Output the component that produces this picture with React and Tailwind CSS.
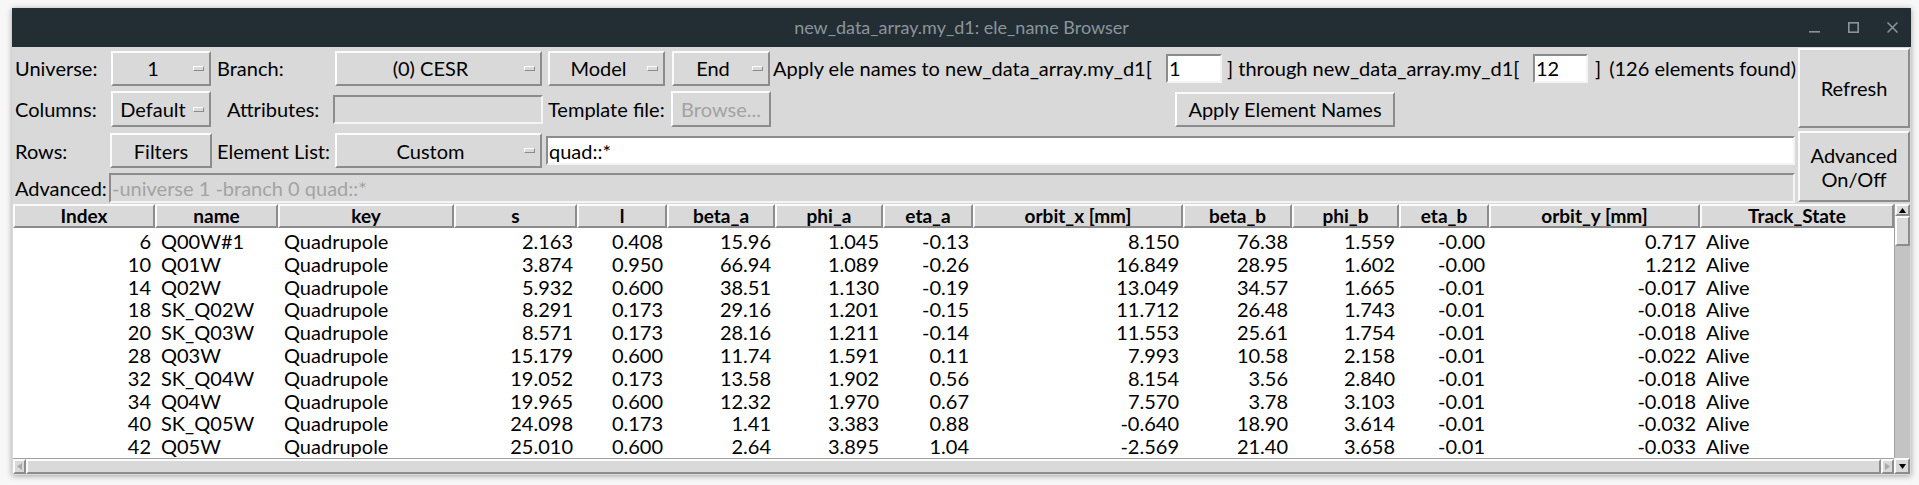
import React from "react";

const raised =
  "border-2 border-t-[#fbfbfb] border-l-[#fbfbfb] border-r-[#8c8c8c] border-b-[#8c8c8c] bg-[#d9d9d9]";
const sunken =
  "border-2 border-t-[#8c8c8c] border-l-[#8c8c8c] border-r-[#f4f4f4] border-b-[#f4f4f4]";
const cols =
  "grid grid-cols-[142px_123px_176px_123px_90px_108px_108px_90px_210px_109px_107px_90px_211px_194px]";

const headers = [
  "Index",
  "name",
  "key",
  "s",
  "l",
  "beta_a",
  "phi_a",
  "eta_a",
  "orbit_x [mm]",
  "beta_b",
  "phi_b",
  "eta_b",
  "orbit_y [mm]",
  "Track_State",
];

// left aligned columns, the rest go right
const leftCols = [1, 2, 13];

const rows = [
  ["6", "Q00W#1", "Quadrupole", "2.163", "0.408", "15.96", "1.045", "-0.13", "8.150", "76.38", "1.559", "-0.00", "0.717", "Alive"],
  ["10", "Q01W", "Quadrupole", "3.874", "0.950", "66.94", "1.089", "-0.26", "16.849", "28.95", "1.602", "-0.00", "1.212", "Alive"],
  ["14", "Q02W", "Quadrupole", "5.932", "0.600", "38.51", "1.130", "-0.19", "13.049", "34.57", "1.665", "-0.01", "-0.017", "Alive"],
  ["18", "SK_Q02W", "Quadrupole", "8.291", "0.173", "29.16", "1.201", "-0.15", "11.712", "26.48", "1.743", "-0.01", "-0.018", "Alive"],
  ["20", "SK_Q03W", "Quadrupole", "8.571", "0.173", "28.16", "1.211", "-0.14", "11.553", "25.61", "1.754", "-0.01", "-0.018", "Alive"],
  ["28", "Q03W", "Quadrupole", "15.179", "0.600", "11.74", "1.591", "0.11", "7.993", "10.58", "2.158", "-0.01", "-0.022", "Alive"],
  ["32", "SK_Q04W", "Quadrupole", "19.052", "0.173", "13.58", "1.902", "0.56", "8.154", "3.56", "2.840", "-0.01", "-0.018", "Alive"],
  ["34", "Q04W", "Quadrupole", "19.965", "0.600", "12.32", "1.970", "0.67", "7.570", "3.78", "3.103", "-0.01", "-0.018", "Alive"],
  ["40", "SK_Q05W", "Quadrupole", "24.098", "0.173", "1.41", "3.383", "0.88", "-0.640", "18.90", "3.614", "-0.01", "-0.032", "Alive"],
  ["42", "Q05W", "Quadrupole", "25.010", "0.600", "2.64", "3.895", "1.04", "-2.569", "21.40", "3.658", "-0.01", "-0.033", "Alive"],
];

function Indicator() {
  return (
    <span className="w-[11px] h-[5px] mr-[5px] shrink-0 border border-t-[#fbfbfb] border-l-[#fbfbfb] border-r-[#8c8c8c] border-b-[#8c8c8c]" />
  );
}

function MenuButton({ className, children }) {
  return (
    <div className={`${raised} ${className} flex items-center shrink-0`}>
      <span className="flex-1 text-center whitespace-nowrap">{children}</span>
      <Indicator />
    </div>
  );
}

function Button({ className, children, disabled }) {
  return (
    <div
      className={`${raised} ${className} flex items-center justify-center shrink-0 whitespace-nowrap ${
        disabled ? "text-[#a3a3a3]" : ""
      }`}
    >
      {children}
    </div>
  );
}

function Label({ className, children }) {
  return (
    <div className={`${className} shrink-0 whitespace-nowrap`}>{children}</div>
  );
}

export default function App() {
  return (
    <div
      className="w-[1919px] h-[485px] bg-[#f7f7f7] pt-[8px] pl-[12px] text-black"
      style={{ fontFamily: "Lato, 'Noto Sans', sans-serif" }}
    >
      <div className="w-[1899px] h-[467px] bg-[#d9d9d9] flex flex-col shadow-[0_1px_6px_rgba(0,0,0,0.35)]">
        {/* title bar */}
        <div className="h-[39px] bg-[#232e34] grid grid-cols-[1fr_auto_1fr] items-center shrink-0">
          <div />
          <div className="text-[18px] text-[#8a959b]">
            new_data_array.my_d1: ele_name Browser
          </div>
          <div className="flex justify-end items-center gap-[28px] pr-[13px] text-[#8a959b]">
            <svg width="11" height="11" viewBox="0 0 11 11">
              <rect x="0" y="9" width="11" height="1.6" fill="currentColor" />
            </svg>
            <svg width="11" height="11" viewBox="0 0 11 11">
              <rect x="0.8" y="0.8" width="9.4" height="9.4" fill="none" stroke="currentColor" strokeWidth="1.6" />
            </svg>
            <svg width="11" height="11" viewBox="0 0 11 11">
              <path d="M0.5 0.5 L10.5 10.5 M10.5 0.5 L0.5 10.5" stroke="currentColor" strokeWidth="1.5" />
            </svg>
          </div>
        </div>

        {/* controls */}
        <div className="flex h-[157px] pt-[1px] shrink-0 text-[20px]">
          <div className="w-[1784px] flex flex-col">
            <div className="h-[40px] flex items-center">
              <Label className="w-[99px] pl-[3px]">Universe:</Label>
              <MenuButton className="w-[100px] h-[35px]">1</MenuButton>
              <Label className="w-[124px] pl-[6px]">Branch:</Label>
              <MenuButton className="w-[207px] h-[35px]">(0) CESR</MenuButton>
              <MenuButton className="w-[117px] h-[35px] ml-[6px]">Model</MenuButton>
              <MenuButton className="w-[98px] h-[35px] ml-[7px]">End</MenuButton>
              <Label className="w-[393px] ml-[3px]">
                Apply ele names to new_data_array.my_d1[
              </Label>
              <div className={`${sunken} bg-white w-[56px] h-[29px] flex items-center pl-[1px] shrink-0`}>
                1
              </div>
              <Label className="w-[311px] pl-[5px]">
                ] through new_data_array.my_d1[
              </Label>
              <div className={`${sunken} bg-white w-[55px] h-[29px] flex items-center pl-[1px] shrink-0`}>
                12
              </div>
              <Label className="pl-[7px]">]</Label>
              <Label className="pl-[8px]">(126 elements found)</Label>
            </div>

            <div className="h-[42px] flex items-center">
              <Label className="w-[99px] pl-[3px]">Columns:</Label>
              <MenuButton className="w-[100px] h-[36px]">Default</MenuButton>
              <Label className="w-[122px] pl-[16px]">Attributes:</Label>
              <div className={`${sunken} w-[210px] h-[29px] shrink-0`} />
              <Label className="w-[128px] pl-[5px]">Template file:</Label>
              <Button className="w-[100px] h-[36px]" disabled>
                Browse...
              </Button>
              <Button className="w-[220px] h-[35px] ml-[404px]">
                Apply Element Names
              </Button>
            </div>

            <div className="h-[41px] flex items-center">
              <Label className="w-[98px] pl-[3px]">Rows:</Label>
              <Button className="w-[102px] h-[35px]">Filters</Button>
              <Label className="w-[123px] pl-[5px]">Element List:</Label>
              <MenuButton className="w-[207px] h-[35px]">Custom</MenuButton>
              <div className={`${sunken} bg-white w-[1249px] h-[29px] ml-[4px] flex items-center pl-[1px] shrink-0`}>
                quad::*
              </div>
            </div>

            <div className="h-[33px] flex items-center">
              <Label className="w-[97px] pl-[3px]">Advanced:</Label>
              <div className={`${sunken} w-[1686px] h-[30px] flex items-center pl-[1px] text-[#a3a3a3] shrink-0`}>
                -universe 1 -branch 0 quad::*
              </div>
            </div>
          </div>

          <div className="w-[115px] flex flex-col pl-[2px] pr-[1px] gap-[3px]">
            <Button className="h-[80px]">Refresh</Button>
            <div className={`${raised} h-[71px] flex flex-col items-center justify-center leading-[24px]`}>
              <span>Advanced</span>
              <span>On/Off</span>
            </div>
          </div>
        </div>

        {/* table */}
        <div className="flex-1 flex flex-col pl-[1px]">
          <div className="flex flex-1">
            <div className="w-[1881px] flex flex-col">
              <div className={`${cols} h-[24px] text-[19px] font-bold relative z-10`}>
                {headers.map((h) => (
                  <div
                    key={h}
                    className={`${raised} flex items-center justify-center whitespace-nowrap leading-[18px]`}
                  >
                    {h}
                  </div>
                ))}
              </div>
              <div className="flex-1 bg-white pt-[2px] text-[20px]">
                {rows.map((r, i) => (
                  <div key={i} className={`${cols} h-[22.8px] items-center`}>
                    {r.map((c, j) => (
                      <div
                        key={j}
                        className={
                          leftCols.includes(j)
                            ? "pl-[6px] whitespace-nowrap leading-[22.8px]"
                            : "pr-[4px] text-right whitespace-nowrap leading-[22.8px]"
                        }
                      >
                        {c}
                      </div>
                    ))}
                  </div>
                ))}
              </div>
            </div>

            {/* vertical scrollbar */}
            <div className="w-[16px] flex flex-col bg-[#c3c3c3] border-l border-[#a0a0a0]">
              <div className={`${raised} h-[12px] flex items-center justify-center`}>
                <svg width="7" height="5" viewBox="0 0 7 5">
                  <path d="M0 5 L3.5 0 L7 5 Z" fill="#000" />
                </svg>
              </div>
              <div className={`${raised} h-[30px]`} />
              <div className="flex-1" />
            </div>
          </div>

          {/* horizontal scrollbar */}
          <div className="h-[16px] flex shrink-0 mb-[1px]">
            <div className="w-[1881px] flex bg-[#c3c3c3] border-t border-[#a0a0a0]">
              <div className={`${raised} w-[13px] flex items-center justify-center`}>
                <svg width="5" height="7" viewBox="0 0 5 7">
                  <path d="M5 0 L0 3.5 L5 7 Z" fill="#a8a8a8" />
                </svg>
              </div>
              <div className={`${raised} flex-1`} />
              <div className={`${raised} w-[13px] flex items-center justify-center`}>
                <svg width="5" height="7" viewBox="0 0 5 7">
                  <path d="M0 0 L5 3.5 L0 7 Z" fill="#a8a8a8" />
                </svg>
              </div>
            </div>
            <div className={`${raised} w-[16px] flex items-center justify-center`}>
              <svg width="7" height="5" viewBox="0 0 7 5">
                <path d="M0 0 L3.5 5 L7 0 Z" fill="#000" />
              </svg>
            </div>
          </div>
        </div>
      </div>
    </div>
  );
}
